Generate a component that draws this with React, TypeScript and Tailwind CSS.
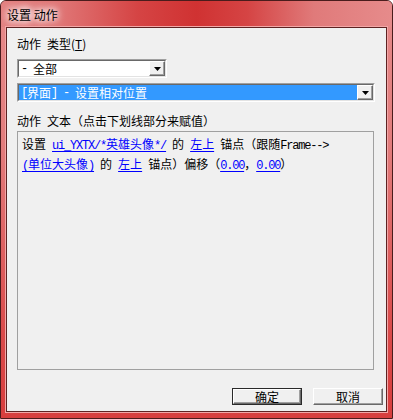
import React from 'react';

const cjk = "[font-family:'Noto_Sans_CJK_SC','Noto_Sans',sans-serif]";
const mono = "[font-family:'Liberation_Mono',monospace] tracking-[-1.2px]";

function Lat({ children }: { children: React.ReactNode }) {
    return <span className={mono}>{children}</span>;
}

function A({ children }: { children: React.ReactNode }) {
    return (
        <span className="text-[#0000ff] underline underline-offset-[2px] decoration-[1px]">
            {children}
        </span>
    );
}

function Arrow() {
    return (
        <svg width="7" height="4" viewBox="0 0 7 4">
            <polygon points="0,0 7,0 3.5,4" fill="#000" />
        </svg>
    );
}

function DropButton() {
    return (
        <div className="flex h-full w-[16px] items-center justify-center border border-t-white border-l-white border-r-[#696969] border-b-[#696969] bg-[#f0f0f0] shadow-[inset_-1px_-1px_0_#a0a0a0]">
            <Arrow />
        </div>
    );
}

function Combo({
    width,
    selected,
    children,
}: {
    width: string;
    selected?: boolean;
    children: React.ReactNode;
}) {
    return (
        <div
            className={`${width} h-[19px] border border-t-[#a0a0a0] border-l-[#a0a0a0] border-r-white border-b-white`}
        >
            <div className="flex h-full border border-t-[#696969] border-l-[#696969] border-r-[#e3e3e3] border-b-[#e3e3e3] bg-white">
                <div
                    className={`flex flex-1 items-center whitespace-pre pl-[2px] text-[12px] leading-none ${
                        selected ? 'bg-[#3399ff] text-white' : 'text-black'
                    }`}
                >
                    {children}
                </div>
                <DropButton />
            </div>
        </div>
    );
}

function Btn({ children, def }: { children: React.ReactNode; def?: boolean }) {
    return (
        <div
            className={`h-[17px] w-[70px] ${def ? 'border border-[#2a2a2a]' : ''}`}
        >
            <div className="flex h-full items-center justify-center border border-t-white border-l-white border-r-[#696969] border-b-[#696969] bg-[#f0f0f0] text-[12px] leading-none text-black shadow-[inset_-1px_-1px_0_#a0a0a0]">
                {children}
            </div>
        </div>
    );
}

export default function App() {
    return (
        <div
            className={`${cjk} flex h-[419px] w-[393px] flex-col overflow-hidden rounded-t-[6px] border border-[#4a1c1c] bg-[linear-gradient(180deg,#e68a8a_0%,#e27c7c_35%,#da4a4a_80%,#d83e3e_100%)] px-[5px] pb-[6px]`}
        >
            <div className="-mx-[5px] h-[26px] shrink-0 bg-[linear-gradient(90deg,#e38282_0%,#e07676_15%,#d54444_35%,#d03232_50%,#d54444_63%,#e07a7a_80%,#e68b8b_100%)] pl-[6px]">
                <span className="text-[12px] leading-[26px] text-black [text-shadow:0_0_6px_#fff,0_0_8px_#fff,0_0_10px_#fff]">
                    设置 动作
                </span>
            </div>

            <div className="flex flex-1 flex-col border border-[#5e2222] bg-[#f0f0f0] pl-[10px] pr-[12px] shadow-[0_0_0_1px_#f2a7a7]">
                <div className="mt-[9px] h-[14px] whitespace-pre text-[12px] leading-[14px] text-black">
                    动作<Lat> </Lat>类型(<u>T</u>)
                </div>

                <div className="mt-[8px]">
                    <Combo width="w-[150px]">
                        <Lat>- </Lat>全部
                    </Combo>
                </div>

                <div className="mt-[5px]">
                    <Combo width="w-[358px]" selected>
                        <Lat>[</Lat>界面<Lat>] - </Lat>设置相对位置
                    </Combo>
                </div>

                <div className="mt-[12px] h-[14px] whitespace-pre text-[12px] leading-[14px] text-black">
                    动作<Lat> </Lat>文本（点击下划线部分来赋值）
                </div>

                <div className="mt-[3px] h-[239px] w-[357px] whitespace-pre border border-[#a0a0a0] pl-[4px] pt-[3px] text-[12px] leading-[18px] text-black">
                    <div>
                        设置<Lat> </Lat>
                        <A>
                            <Lat>ui_YXTX/*</Lat>英雄头像<Lat>*/</Lat>
                        </A>
                        <Lat> </Lat>的<Lat> </Lat>
                        <A>左上</A>
                        <Lat> </Lat>锚点（跟随<Lat>Frame--&gt;</Lat>
                    </div>
                    <div>
                        <A>
                            <Lat>(</Lat>单位大头像<Lat>)</Lat>
                        </A>
                        <Lat> </Lat>的<Lat> </Lat>
                        <A>左上</A>
                        <Lat> </Lat>锚点）偏移（
                        <A>
                            <Lat>0.00</Lat>
                        </A>
                        ，
                        <A>
                            <Lat>0.00</Lat>
                        </A>
                        ）
                    </div>
                </div>

                <div className="-mr-[9px] mt-[18px] flex justify-end gap-[11px]">
                    <Btn def>确定</Btn>
                    <Btn>取消</Btn>
                </div>
            </div>
        </div>
    );
}
